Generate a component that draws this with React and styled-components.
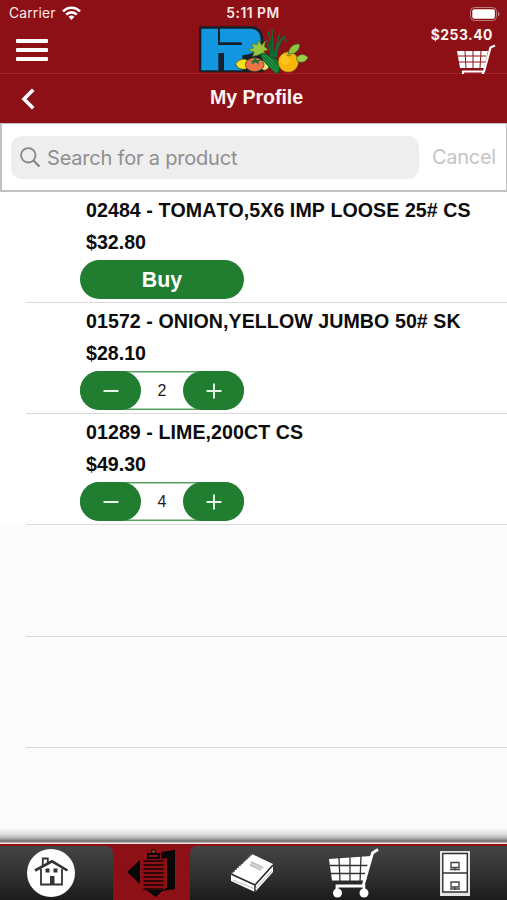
import React from 'react';
import styled, { createGlobalStyle } from 'styled-components';

const colors = {
  red: '#8d1017',
  redLine: '#a81e28',
  green: '#217d30',
  white: '#ffffff',
  field: '#eeeeee',
  placeholder: '#8e8e90',
  disabled: '#c4c4c6',
  border: '#dadada',
};

const GlobalStyle = createGlobalStyle`
  * {
    box-sizing: border-box;
  }

  body {
    margin: 0;
    background: ${colors.white};
    font-family: Inter, "Liberation Sans", sans-serif;
  }

  button, input {
    font: inherit;
    border: 0;
    padding: 0;
    background: none;
  }

  svg {
    display: block;
    flex: none;
  }
`;

const Screen = styled.div`
  display: flex;
  flex-direction: column;
  width: 507px;
  height: 900px;
  overflow: hidden;
  background: ${colors.white};
`;

const Header = styled.header`
  height: 74px;
  flex: none;
  background: ${colors.red};
  border-bottom: 1px solid ${colors.redLine};
`;

const StatusBar = styled.div`
  display: grid;
  grid-template-columns: 1fr auto 1fr;
  align-items: center;
  height: 26px;
  padding: 1px 7px 0 9px;
  color: #fbe9e6;
  font-size: 13.8px;
  line-height: 25px;
`;

const Carrier = styled.div`
  display: flex;
  align-items: center;
  gap: 6px;
  letter-spacing: 0.2px;
`;

const Clock = styled.div`
  margin-right: 3px;
  font-weight: 600;
  font-size: 13.8px;
  letter-spacing: 0.5px;
`;

const BatterySlot = styled.div`
  display: flex;
  justify-content: flex-end;
`;

const NavRow = styled.div`
  display: grid;
  grid-template-columns: 182px 112px 1fr;
  height: 48px;
  padding: 0 11px 0 16px;
`;

const MenuButton = styled.button`
  display: flex;
  flex-direction: column;
  gap: 5px;
  width: 32px;
  padding-top: 13px;

  span {
    height: 4px;
    border-radius: 1px;
    background: ${colors.white};
  }
`;

const CartSummary = styled.div`
  display: flex;
  flex-direction: column;
  align-items: flex-end;
  color: #fff3ee;
  font-size: 13.9px;
  font-weight: 700;
  letter-spacing: 0.5px;
  line-height: 18px;

  span {
    margin-right: 3px;
  }
`;

const TitleBar = styled.div`
  display: grid;
  grid-template-columns: 60px 1fr 60px;
  align-items: center;
  height: 49px;
  flex: none;
  padding: 0 0 2px 6px;
  background: ${colors.red};
`;

const BackButton = styled.button`
  padding: 2px 0 0 15px;
`;

const Title = styled.h1`
  margin: 0;
  color: #fff4f2;
  text-align: center;
  font: bold 19.6px/28px "Liberation Sans", sans-serif;
  letter-spacing: -0.05px;
  padding-bottom: 2px;
`;

const SearchBar = styled.div`
  display: flex;
  align-items: center;
  height: 69px;
  flex: none;
  padding: 0 9px 0 9px;
  border: solid #c2c2c4;
  border-width: 1px 1px 2px 2px;
`;

const SearchField = styled.label`
  display: flex;
  align-items: center;
  gap: 6px;
  width: 408px;
  height: 43px;
  padding-left: 9px;
  border-radius: 11px;
  background: ${colors.field};
`;

const SearchInput = styled.input`
  flex: 1;
  min-width: 0;
  height: 30px;
  padding-top: 2px;
  font-size: 20px;
  letter-spacing: -0.2px;
  outline: none;

  &::placeholder {
    color: ${colors.placeholder};
    opacity: 1;
  }
`;

const CancelButton = styled.button`
  margin-left: 13px;
  color: ${colors.disabled};
  font-size: 20px;
  letter-spacing: -0.3px;
`;

const List = styled.ul`
  flex: 1;
  margin: 0;
  padding: 0;
  list-style: none;
  background: linear-gradient(${colors.white} 333px, #fcfcfc 333px);
`;

const Row = styled.li`
  height: ${props => props.$first ? '111px' : '111.2px'};
  margin-left: 26px;
  padding: 2px 0 0 54px;
  border-bottom: 1px solid ${colors.border};
`;

const ProductText = styled.div`
  padding-left: 6px;
  color: #0c0c0c;
  white-space: nowrap;
  font: bold 19.6px/32px "Liberation Sans", sans-serif;
  font-kerning: none;
  letter-spacing: ${props => props.$tracking || '0'};
`;

const BuyButton = styled.button`
  display: block;
  width: 164px;
  height: 39px;
  margin-top: 2px;
  padding-top: 1px;
  border-radius: 20px;
  background: ${colors.green};
  color: ${colors.white};
  font: bold 21.4px/39px "Liberation Sans", sans-serif;
`;

const Stepper = styled.div`
  display: flex;
  align-items: center;
  justify-content: space-between;
  width: 164px;
  height: 39px;
  margin-top: 2px;
  border-radius: 20px;
  background: ${colors.white};
  box-shadow: inset 0 0 0 1.5px #57a263;
`;

const StepButton = styled.button`
  display: flex;
  align-items: center;
  justify-content: center;
  width: 61px;
  height: 39px;
  border-radius: 20px;
  background: ${colors.green};
`;

const Quantity = styled.span`
  padding-top: 1px;
  color: #1c1c1c;
  font: 16px/38px "Liberation Sans", sans-serif;
`;

const Footer = styled.footer`
  flex: none;
  height: 72px;
  padding-top: 15px;
  background: linear-gradient(#fcfcfc 0, #dedede 6px, #b4b4b4 10px, #747474 13px, #858585 14px, #f2dede 15px, #f2dede 16px, #8d1017 16px);
`;

const TabBar = styled.nav`
  display: grid;
  grid-template-columns: 113px 77px 317px;
  height: 57px;
  padding-top: 3px;
`;

const TabGroup = styled.div`
  display: flex;
  height: 54px;
  border-radius: ${props => props.$side === 'left' ? '0 7px 0 0' : '7px 0 0 0'};
  background: linear-gradient(#454545, #303030 55%, #1b1b1b);
`;

const Tab = styled.button`
  display: flex;
  align-items: center;
  justify-content: center;
  flex: none;
  width: ${props => props.$width}px;
  height: 54px;
  background: ${props => props.$active ? colors.red : 'transparent'};
`;

const WifiIcon = () => (
  <svg width="19" height="15" viewBox="0 0 19 15" fill="none" stroke="#fff" strokeWidth="2.6">
    <path d="M1 5.5C5.6 .4 13.4 .4 18 5.5" />
    <path d="M4.2 8.6c3-3 7.6-3 10.6 0" />
    <path d="M6.6 10.8c1.8-1.6 4-1.6 5.8 0L9.5 14z" fill="#fff" stroke="none" />
  </svg>
);

const BatteryIcon = () => (
  <svg width="30" height="14" viewBox="0 0 30 14">
    <rect x=".5" y=".5" width="26" height="13" rx="4" fill="none" stroke="#c07b80" />
    <rect x="2.3" y="2.3" width="22.6" height="9.4" rx="2" fill="#fff" />
    <path d="M28 4.5c2 .8 2 4.2 0 5z" fill="#c07b80" />
  </svg>
);

const Logo = () => (
  <svg width="112" height="50" viewBox="54 78 336 150">
    <path d="M57 79H218C236 80 249 94 250 116V217H57z" fill="#17202a" />
    <path d="M64 86H214C232 88 242 100 242 120C240 148 220 164 187 166V211H132V159H115V211H64z" fill="#1296df" />
    <path d="M114 84h6v43h61q8 0 4 8h-71z" fill="#17202a" />
    <g stroke="#0f6b38" strokeWidth="4" fill="none">
      <path d="M271 174C275 138 271 110 263 94M277 174C280 137 276 110 276 86M285 174C287 145 292 120 300 98M289 170C294 137 303 115 314 110L319 127M276 168C265 140 264 130 260 119M281 170L297 128" />
      <path d="M279 170C291 139 300 120 314 110" strokeWidth="7" />
    </g>
    <path d="M166 192Q177 177 190 177Q207 178 208 193Q205 209 190 208L176 205z" fill="#f7e319" stroke="#343710" strokeWidth="2" />
    <path d="M248 181Q265 179 268 194Q268 208 253 211L242 207z" fill="#eee77b" stroke="#343710" strokeWidth="2" />
    <path d="M238 164L218 169L223 156L204 150L221 144L215 131L231 135L237 121L245 136L256 123L253 140L264 149L251 153L258 165L242 161z" fill="#99c83e" stroke="#59812d" strokeWidth="2" />
    <path d="M240 164Q248 155 262 164L292 179Q305 193 296 217L290 223Q269 203 255 188z" fill="#0b7a35" stroke="#09421f" strokeWidth="2" />
    <path d="M249 165Q276 186 291 216M256 165Q281 181 295 208M244 169Q267 192 284 214" fill="none" stroke="#4fa646" strokeWidth="2" />
    <ellipse cx="224" cy="194" rx="28" ry="21" fill="#ef7342" stroke="#2c3516" strokeWidth="2" />
    <path d="M204 181L220 182L225 171L230 180L245 181L234 185L239 194L226 187L214 194L218 185z" fill="#13733a" />
    <circle cx="325" cy="186" r="31" fill="#f6b709" stroke="#5a3911" strokeWidth="2" />
    <ellipse cx="315" cy="179" rx="13" ry="15" fill="#ffca26" opacity=".7" />
    <path d="M325 163C326 142 341 130 359 132C360 149 347 163 330 161z" fill="#8dc63f" stroke="#376529" strokeWidth="2" />
    <path d="M350 173C361 160 373 160 384 173C376 188 361 191 350 181z" fill="#9bcf46" stroke="#376529" strokeWidth="2" />
    <path d="M319 165l8 3 7-3" fill="none" stroke="#28662f" strokeWidth="2" />
  </svg>
);

const SmallCart = () => (
  <svg width="39" height="31" viewBox="0 0 39 31">
    <path d="M0 7H31L27 24H3z" fill="#fff" />
    <path d="M8 7l1 17M16 7v17M24 7l-1 17M1 12h28M2 18h27" stroke={colors.red} strokeWidth="1" />
    <path d="M38 1.5L33.5 3.5L27 27.5H5M6 27v3.5M26 27v3.5" fill="none" stroke="#fff" strokeWidth="2.2" />
  </svg>
);

const BackIcon = () => (
  <svg width="14" height="22" viewBox="0 0 14 22" fill="none" stroke="#fff" strokeWidth="3.6">
    <path d="M12.2 1.8L3 11l9.2 9.2" />
  </svg>
);

const SearchIcon = () => (
  <svg width="21" height="21" viewBox="0 0 21 21" fill="none" stroke="#858587" strokeWidth="1.8">
    <circle cx="8.3" cy="8.3" r="7.2" />
    <path d="M13.5 13.5l6 6" strokeWidth="2.2" />
  </svg>
);

const StepIcon = ({ plus }) => (
  <svg width="16" height="16" viewBox="0 0 16 16" stroke="#e8f5e9" strokeWidth="2">
    <path d={plus ? 'M.5 8h15M8 .5v15' : 'M.5 8h15'} />
  </svg>
);

const HomeIcon = () => (
  <svg width="48" height="48" viewBox="0 0 48 48">
    <circle cx="24" cy="24" r="24" fill="#fff" />
    <g fill="none" stroke="#333" strokeWidth="1.8">
      <path d="M8 21.5L25 12.3L40.5 21.5" strokeWidth="2.6" />
      <path d="M14 20v15.5h21V20M15.8 17V9.5h5v5" />
    </g>
    <path d="M18.5 19.5h4v4h-4zM26.5 19.5h4v4h-4zM23 27h4.5v8H23z" fill="#333" />
  </svg>
);

const OrdersIcon = () => (
  <svg width="49" height="49" viewBox="0 0 49 49">
    <path d="M0 23L13 11V35zM34 3L48 1V40L35 42L29 48L19 41H37L40 38V9L34 10z" fill="#070707" />
    <path d="M16.5 12v28h20V12z" fill={colors.red} />
    <path d="M16.5 12h20M16.5 16h20M16.5 20h20M16.5 24h20M16.5 28h20M16.5 32h20M16.5 36h20M16.5 40h20" stroke="#140507" strokeWidth="1.5" />
    <path d="M21 5h11v4H21z" fill={colors.red} stroke="#070707" strokeWidth="2" />
    <circle cx="26.5" cy="2.5" r="2" fill="#81451b" stroke="#070707" />
  </svg>
);

const BookIcon = () => (
  <svg width="44" height="40" viewBox="0 0 44 40" strokeLinejoin="round">
    <path d="M1 21L22 1L43 11V19L25 39L1 28z" fill="#fff" />
    <path d="M1 21L25 32L43 12M25 32V39" fill="none" stroke="#292929" strokeWidth="1.6" />
    <path d="M1 21L22 1" stroke="#555" strokeWidth="1.4" strokeDasharray="2 1" />
    <path d="M3 27L25 36L42 18" fill="none" stroke="#999" strokeWidth=".7" />
    <path d="M21 9l12 6M20 11.5l11 5.5" stroke="#c2c2c2" strokeWidth="2.2" />
  </svg>
);

const CartIcon = () => (
  <svg width="50" height="50" viewBox="0 0 50 50">
    <path d="M0 11L42 8L37 32.5H3z" fill="#fff" />
    <path d="M10 9l1 25M21 9v25M32 8l-1 26M1 17.5h39M2 25.5h37" stroke="#333" strokeWidth="1.3" />
    <path d="M49 1.5L43.5 5L34 38H8v6" fill="none" stroke="#fff" strokeWidth="2.8" />
    <circle cx="8.5" cy="45" r="4.5" fill="#fff" />
    <circle cx="35" cy="45" r="4.5" fill="#fff" />
    <path d="M35 36v8" stroke="#fff" strokeWidth="2.5" />
  </svg>
);

const CabinetIcon = () => (
  <svg width="30" height="45" viewBox="0 0 30 45">
    <path d="M0 0h30v45H0z" fill="#e4e4e4" />
    <path d="M2.8 2.5h24.5V41H2.8zM3 22h24" fill="#fff" stroke="#303030" strokeWidth="1.4" />
    <path d="M11 11.5h8v5h-8zM10 18.5h10M15 16.5v3M11 31h8v5h-8zM10 38h10M15 36v3" fill="none" stroke="#444" strokeWidth="1.4" />
  </svg>
);

const products = [
  { name: '02484 - TOMATO,5X6 IMP LOOSE 25# CS', price: '$32.80', quantity: 0 },
  { name: '01572 - ONION,YELLOW JUMBO 50# SK', price: '$28.10', quantity: 2 },
  { name: '01289 - LIME,200CT CS', price: '$49.30', quantity: 4 },
];

const Product = ({ name, price, quantity, first }) => (
  <Row $first={first}>
    <ProductText $tracking="0.07px">{name}</ProductText>
    <ProductText>{price}</ProductText>
    {quantity === 0 ? (
      <BuyButton>Buy</BuyButton>
    ) : (
      <Stepper>
        <StepButton aria-label="Remove one"><StepIcon /></StepButton>
        <Quantity>{quantity}</Quantity>
        <StepButton aria-label="Add one"><StepIcon plus /></StepButton>
      </Stepper>
    )}
  </Row>
);

const App = () => (
  <Screen>
    <GlobalStyle />
    <Header>
      <StatusBar>
        <Carrier>Carrier <WifiIcon /></Carrier>
        <Clock>5:11 PM</Clock>
        <BatterySlot><BatteryIcon /></BatterySlot>
      </StatusBar>
      <NavRow>
        <MenuButton aria-label="Menu">
          <span />
          <span />
          <span />
        </MenuButton>
        <Logo />
        <CartSummary>
          <span>$253.40</span>
          <SmallCart />
        </CartSummary>
      </NavRow>
    </Header>
    <TitleBar>
      <BackButton aria-label="Back"><BackIcon /></BackButton>
      <Title>My Profile</Title>
    </TitleBar>
    <SearchBar>
      <SearchField>
        <SearchIcon />
        <SearchInput placeholder="Search for a product" />
      </SearchField>
      <CancelButton>Cancel</CancelButton>
    </SearchBar>
    <List>
      {products.map((product, i) => (
        <Product key={product.name} first={i === 0} {...product} />
      ))}
      <Row />
      <Row />
    </List>
    <Footer>
      <TabBar>
        <TabGroup $side="left">
          <Tab $width={101} aria-label="Home"><HomeIcon /></Tab>
        </TabGroup>
        <Tab $width={77} $active aria-label="Orders"><OrdersIcon /></Tab>
        <TabGroup $side="right">
          <Tab $width={124} aria-label="Catalog"><BookIcon /></Tab>
          <Tab $width={80} aria-label="Cart"><CartIcon /></Tab>
          <Tab $width={122} aria-label="Files"><CabinetIcon /></Tab>
        </TabGroup>
      </TabBar>
    </Footer>
  </Screen>
);

export default App;
